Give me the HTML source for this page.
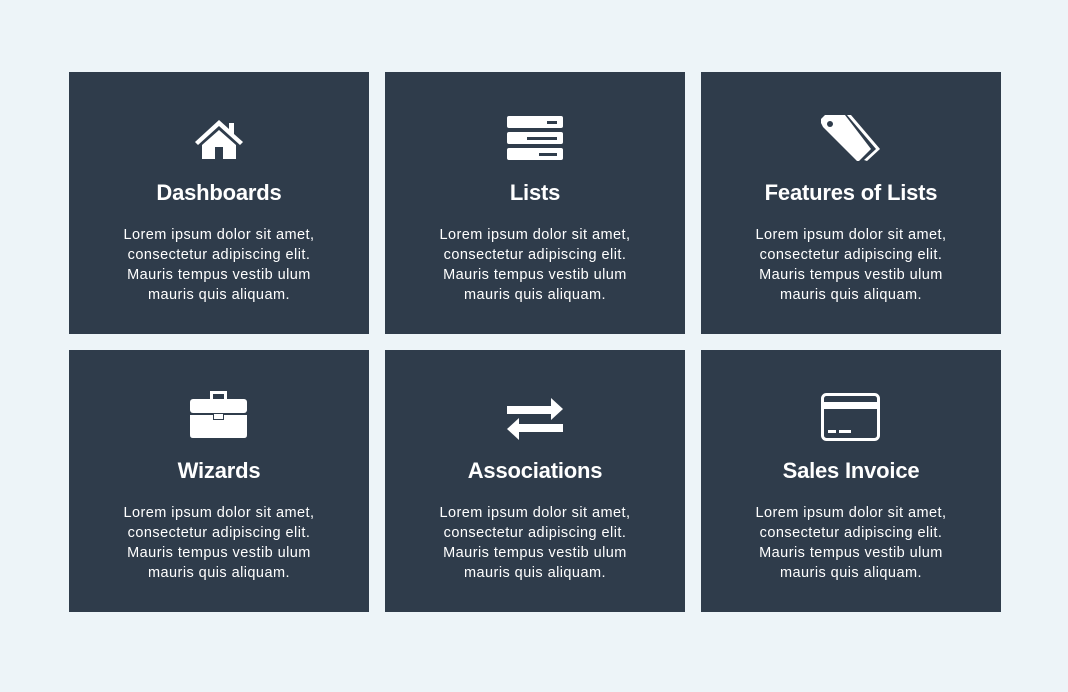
<!DOCTYPE html>
<html><head><style>
body{margin:0;width:1068px;height:692px;background:#edf4f8;font-family:"Liberation Sans",sans-serif;position:relative;overflow:hidden}
.c{position:absolute;width:300px;height:262px;background:#2f3c4b;color:#fff;text-align:center}
.c svg{position:absolute}
h3{position:absolute;top:108px;left:0;right:0;margin:0;font-size:22px;font-weight:bold;letter-spacing:-0.2px}
p{position:absolute;top:153px;left:0;right:0;margin:0;font-size:14.5px;line-height:20px;letter-spacing:0.45px}
</style></head><body>
<div class="c" style="left:69px;top:72px">
<svg style="left:124px;top:46px" width="52" height="42" viewBox="0 0 52 42"><path d="M26 2 L2 24 L5 27 L26 8 L47 27 L50 24 L41 16 L41 5 L36 5 L36 11 Z" fill="#fff"/><path d="M26 12 L9 27 L9 41 L22 41 L22 29 L30 29 L30 41 L43 41 L43 27 Z" fill="#fff"/></svg>
<h3>Dashboards</h3>
<p>Lorem ipsum dolor sit amet,<br>consectetur adipiscing elit.<br>Mauris tempus vestib ulum<br>mauris quis aliquam.</p></div>
<div class="c" style="left:385px;top:72px">
<svg style="left:122px;top:44px" width="56" height="44" viewBox="0 0 56 44"><g fill="#fff"><rect x="0" y="0" width="56" height="12" rx="2"/><rect x="0" y="16" width="56" height="12" rx="2"/><rect x="0" y="32" width="56" height="12" rx="2"/></g><g fill="#2f3c4b"><rect x="40" y="5" width="10" height="3"/><rect x="20" y="21" width="30" height="3"/><rect x="32" y="37" width="18" height="3"/></g></svg>
<h3>Lists</h3>
<p>Lorem ipsum dolor sit amet,<br>consectetur adipiscing elit.<br>Mauris tempus vestib ulum<br>mauris quis aliquam.</p></div>
<div class="c" style="left:701px;top:72px">
<svg style="left:120px;top:43px" width="60" height="46" viewBox="0 0 60 46"><path d="M26 0 L30 0 L59 34 L46 46 L43 45 L55 34 Z" fill="#fff"/><path d="M4 0 L24 0 L50 34 L38 46 L36 46 L2 12 L0 8 L0 4 Z" fill="#fff"/><circle cx="9" cy="9" r="3" fill="#2f3c4b"/></svg>
<h3>Features of Lists</h3>
<p>Lorem ipsum dolor sit amet,<br>consectetur adipiscing elit.<br>Mauris tempus vestib ulum<br>mauris quis aliquam.</p></div>
<div class="c" style="left:69px;top:350px">
<svg style="left:121px;top:40px" width="57" height="48" viewBox="0 0 57 48"><path d="M20 4 L20 1 L37 1 L37 9 L34 9 L34 4 L23 4 L23 9 L20 9 Z" fill="#fff"/><rect x="0" y="9" width="57" height="14" rx="3" fill="#fff"/><path d="M0 25 L23 25 L23 30 L34 30 L34 25 L57 25 L57 45 Q57 48 54 48 L3 48 Q0 48 0 45 Z" fill="#fff"/><rect x="24" y="24" width="9" height="5" fill="#fff"/></svg>
<h3>Wizards</h3>
<p>Lorem ipsum dolor sit amet,<br>consectetur adipiscing elit.<br>Mauris tempus vestib ulum<br>mauris quis aliquam.</p></div>
<div class="c" style="left:385px;top:350px">
<svg style="left:122px;top:48px" width="56" height="42" viewBox="0 0 56 42"><path d="M0 8 L44 8 L44 0 L56 11 L44 22 L44 16 L0 16 Z" fill="#fff"/><path d="M56 26 L12 26 L12 20 L0 31 L12 42 L12 34 L56 34 Z" fill="#fff"/></svg>
<h3>Associations</h3>
<p>Lorem ipsum dolor sit amet,<br>consectetur adipiscing elit.<br>Mauris tempus vestib ulum<br>mauris quis aliquam.</p></div>
<div class="c" style="left:701px;top:350px">
<svg style="left:120px;top:43px" width="59" height="48" viewBox="0 0 59 48"><rect x="1.5" y="1.5" width="56" height="45" rx="4" fill="none" stroke="#fff" stroke-width="3"/><rect x="2" y="9" width="55" height="7" fill="#fff"/><rect x="7" y="37" width="8" height="3" fill="#fff"/><rect x="18" y="37" width="12" height="3" fill="#fff"/></svg>
<h3>Sales Invoice</h3>
<p>Lorem ipsum dolor sit amet,<br>consectetur adipiscing elit.<br>Mauris tempus vestib ulum<br>mauris quis aliquam.</p></div>
</body></html>
